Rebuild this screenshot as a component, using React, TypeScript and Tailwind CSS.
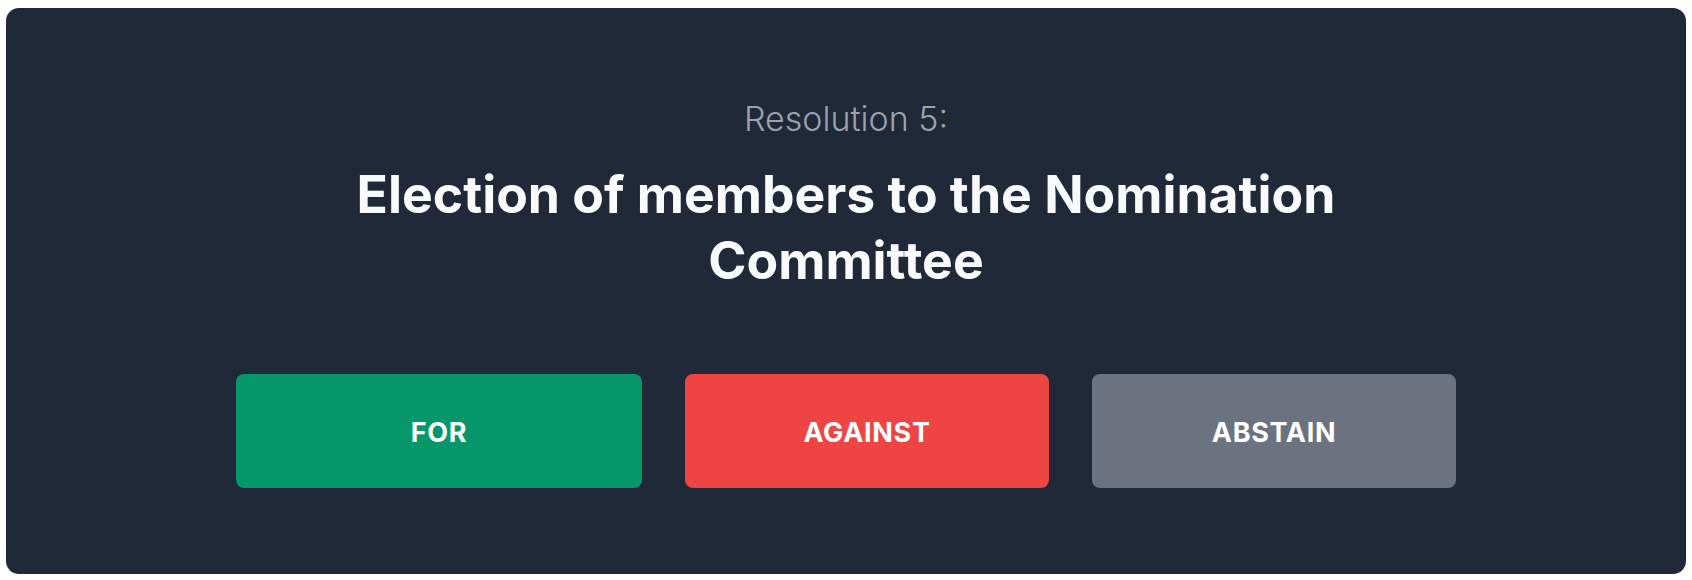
import React from 'react';

const choices = [
  { label: 'FOR', className: 'w-[406px] bg-[#059669]' },
  { label: 'AGAINST', className: 'w-[364px] bg-[#ef4444]' },
  { label: 'ABSTAIN', className: 'w-[364px] bg-[#6b7280]' },
];

export default function App() {
  return (
    <div className="min-h-screen bg-white px-[6px] py-2 font-['Inter',sans-serif]">
      <div className="flex flex-col items-center rounded-[13px] bg-[#1f2937] pt-[94px] pb-[86px]">
        {/* Resolution heading */}
        <p className="text-[34px] font-light leading-none text-[#9ca3af]">Resolution 5:</p>
        <h1 className="mt-[25px] max-w-[1000px] text-center text-[51.7px] font-bold leading-[66px] text-[#f9fafb]">
          Election of members to the Nomination Committee
        </h1>

        {/* Voting buttons */}
        <div className="mt-[81px] flex gap-[43px]">
          {choices.map((c) => (
            <button
              key={c.label}
              className={`${c.className} flex h-[114px] items-center justify-center rounded-lg pt-[4px] text-[27px] font-bold tracking-wide text-white`}
            >
              {c.label}
            </button>
          ))}
        </div>
      </div>
    </div>
  );
}
